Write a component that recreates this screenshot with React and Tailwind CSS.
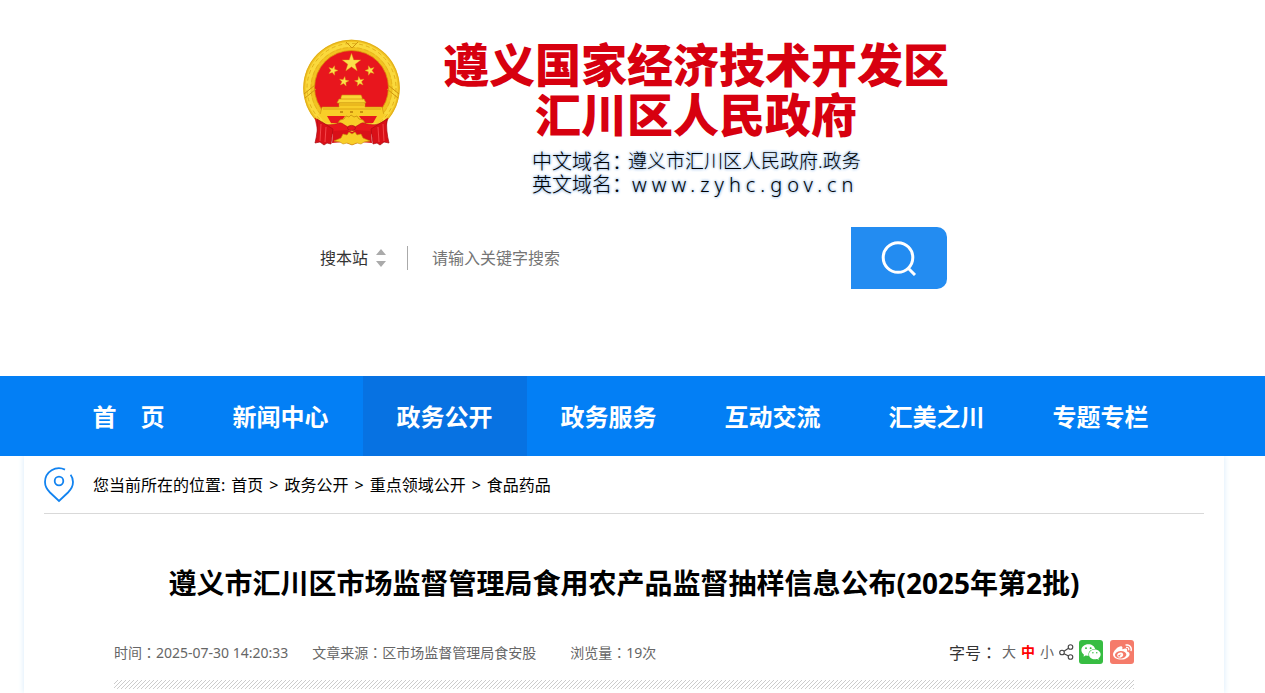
import React from 'react';
import { AiFillWechat } from 'react-icons/ai';
import { FaWeibo } from 'react-icons/fa';

const navItems = [
  { label: '首\u3000页' },
  { label: '新闻中心' },
  { label: '政务公开', active: true },
  { label: '政务服务' },
  { label: '互动交流' },
  { label: '汇美之川' },
  { label: '专题专栏' },
];

const crumbs = ['首页', '政务公开', '重点领域公开', '食品药品'];

function Star({ x, y, r, turn = 0 }) {
  const points = [];
  for (let i = 0; i < 10; i++) {
    const a = ((i * 36 - 90 + turn) * Math.PI) / 180;
    const d = i % 2 ? r * 0.4 : r;
    points.push(`${(x + d * Math.cos(a)).toFixed(2)},${(y + d * Math.sin(a)).toFixed(2)}`);
  }
  return <polygon points={points.join(' ')} fill="#fbe04a" stroke="#e0a416" strokeWidth="0.4" />;
}

function Emblem() {
  return (
    <svg viewBox="0 0 98 108" className="w-[98px] h-[108px] mt-0.5 shrink-0" role="img" aria-label="国徽">
      <circle cx="48.500" cy="49" r="48.300" fill="#f2c321" />
      <circle cx="48.500" cy="49" r="47.800" fill="none" stroke="#dba81a" strokeWidth="0.8" />
      <circle cx="48.500" cy="49" r="43.500" fill="none" stroke="#fad93c" strokeWidth="5" />
      <circle cx="48.500" cy="49" r="44.500" fill="none" stroke="#e3b11c" strokeWidth="1" strokeDasharray="4 3" />
      <circle cx="48.500" cy="49" r="40.500" fill="none" stroke="#e3b11c" strokeWidth="0.8" strokeDasharray="5 2" />
      <circle cx="48.500" cy="48.500" r="37" fill="#e8161d" stroke="#d9940c" strokeWidth="0.8" />
      <path d="M1 55l11-9M2 59l11-9M96 55l-11-9M95 59l-11-9M43 3l6 6 6-6" stroke="#cf9510" strokeWidth="1" fill="none" />
      <Star x={48.5} y={24} r={9.6} />
      <Star x={30} y={31.5} r={5} turn={18} />
      <Star x={67} y={31.5} r={5} turn={-18} />
      <Star x={41} y={42.5} r={5} turn={10} />
      <Star x={56.5} y={42.5} r={5} turn={-10} />
      {/* gate tower */}
      <path d="M38 58l1-2h19l1 2v2h2l2 4H34l2-4h2z" fill="#fbd637" stroke="#c98e0b" strokeWidth="0.6" />
      <path d="M36 64h26v4h17l2 8H17l2-8h17z" fill="#f8cd28" stroke="#c98e0b" strokeWidth="0.6" />
      <path d="M38 60h22M37 66h24M20 70h58" stroke="#d59a0e" strokeWidth="0.8" />
      <path d="M37 73h3M47 73h3M57 73h3" stroke="#b97c08" strokeWidth="1.4" />
      <path d="M15 75h68l-7 9H22z" fill="#f8cd28" />
      <path d="M24 77h18l-5 7h-9zM74 77H56l5 7h9z" fill="#e8161d" />
      {/* gear between the curtains */}
      <path d="M31 90l6-9 4-1 2-3 3 1 2-2 3 2 3-1 2 3 4 1 6 9z" fill="#f8cd28" stroke="#c98e0b" strokeWidth="0.8" />
      <path d="M12 79c10 9 17 7 24 5 4-1 6 4 12.500 5 6.500-1 8.500-6 12.500-5 7 2 14 4 24-5l-4 14c-10 3-24 2-33-3-9 5-23 6-33 3z" fill="#e8161d" stroke="#b50d14" strokeWidth="0.5" />
      <path d="M14 80l16 10-2 15-4-1-3 2-4-3-5 1c2-8 3-16 2-24zM84 80L68 90l2 15 4-1 3 2 4-3 5 1c-2-8-3-16-2-24z" fill="#d91018" stroke="#a90b12" strokeWidth="0.7" />
      <path d="M18 85l-1 17M23 88l-1 15M80 85l1 17M75 88l1 15" stroke="#f4454a" strokeWidth="1" />
      <path d="M30 92l15-1 4 2 4-2 15 1 1 12-12-1-8 3-8-3-12 1z" fill="#d91018" />
      <path d="M31 102l7-3 2-4 4 1 2-3 3 2 3-2 2 3 4-1 2 4 7 3-6 1-3 2-4-1-5 2-5-2-4 1-3-2z" fill="#f8cd28" stroke="#c98e0b" strokeWidth="0.6" />
      <ellipse cx="48.500" cy="89" rx="4" ry="2.600" fill="#e8161d" stroke="#a90b12" strokeWidth="0.7" />
    </svg>
  );
}

function PinIcon() {
  return (
    <svg viewBox="0 0 30 36" className="w-[30px] h-9" fill="none" stroke="#1283f0" strokeWidth="1.8">
      <path d="M21 2.600A14 14 0 0 0 1 15C1 19.500 3.500 23 6 25.500L15 34l9-8.500c2.500-2.500 5-6 5-10.500 0-2.700-.8-5.200-2.400-7.300" />
      <circle cx="15" cy="14" r="4.300" />
    </svg>
  );
}

function ShareIcon() {
  return (
    <svg viewBox="0 0 15 16" className="w-[15px] h-4" fill="none" stroke="#444" strokeWidth="1.1">
      <circle cx="3" cy="8.500" r="2.300" />
      <circle cx="11.500" cy="3" r="2.300" />
      <circle cx="11.500" cy="13" r="2.300" />
      <path d="M5 7.300l4.500-3M5 9.700l4.700 2.300" />
    </svg>
  );
}

function HatchStrip() {
  return (
    <svg className="block w-full h-[9px] mt-4" shapeRendering="crispEdges" aria-hidden="true">
      <defs>
        <pattern id="hatch" width="4" height="4" patternUnits="userSpaceOnUse">
          <path d="M3 0h1v1h-1zM2 1h1v1h-1zM1 2h1v1h-1zM0 3h1v1h-1z" fill="#ccc" />
        </pattern>
      </defs>
      <rect width="100%" height="9" fill="url(#hatch)" />
    </svg>
  );
}

// full-width colon set in the middle of its square
function Colon() {
  return <span className="font-['Noto_Sans_CJK_TC',sans-serif]">：</span>;
}

function Header() {
  return (
    <header className="h-[376px] pt-[37px] pr-[17px]">
      <div className="w-full max-w-[646px] mx-auto">
        <a href="#home" className="flex items-start gap-[42px] pl-0.5">
          <Emblem />
          <div className="text-center">
            <h1 className="text-[46px] leading-[50px] font-black text-[#d7000f] whitespace-nowrap font-['Noto_Sans_CJK_SC',sans-serif]">
              遵义国家经济技术开发区
              <br />
              汇川区人民政府
            </h1>
            <div className="mt-[13px] pl-[89px] text-left text-xl leading-[23px] font-light text-black whitespace-nowrap [text-shadow:0_0_3px_#8fb8e6,0_0_3px_#8fb8e6]">
              <p className="flex">
                <span className="w-24">中文域名：</span>
                <span className="text-[19px]">遵义市汇川区人民政府.政务</span>
              </p>
              <p className="flex">
                <span>英文域名：</span>
                <span className="tracking-[5px]">www.zyhc.gov.cn</span>
              </p>
            </div>
          </div>
        </a>
        <form className="mt-[31px] flex items-center h-[62px] pl-[19px]" onSubmit={(e) => e.preventDefault()}>
          <div className="relative flex items-center">
            <select aria-label="搜索范围" className="appearance-none w-[66px] text-base text-[#333] bg-transparent outline-none" defaultValue="site">
              <option value="site">搜本站</option>
            </select>
            <svg viewBox="0 0 10 18" className="absolute right-0 w-2.5 h-[18px] pointer-events-none" fill="#aaa">
              <path d="M5 0l5 6H0zM5 18l5-6H0z" />
            </svg>
          </div>
          <span className="w-px h-6 ml-[21px] bg-[#aaa]" />
          <input
            type="text"
            aria-label="关键字"
            placeholder="请输入关键字搜索"
            className="flex-1 min-w-0 h-full px-6 text-base outline-none placeholder:text-[#757575]"
          />
          <button type="submit" aria-label="搜索" className="w-24 h-full flex items-center justify-center rounded-r-[10px] bg-[#238cf1]">
            <svg viewBox="0 0 36 36" className="w-9 h-9" fill="none" stroke="#fff" strokeWidth="3">
              <circle cx="17" cy="17.500" r="14.800" />
              <path d="M27 28l7 7" />
            </svg>
          </button>
        </form>
      </div>
    </header>
  );
}

function Nav() {
  return (
    <nav className="bg-[#037ff5] pr-6">
      <ul className="flex justify-center h-20">
        {navItems.map((item) => (
          <li key={item.label}>
            <a
              href="#nav"
              className={`flex items-center h-full px-[34px] pt-0.5 text-2xl font-bold text-white whitespace-nowrap ${item.active ? 'bg-[#0772e2]' : ''}`}
            >
              {item.label}
            </a>
          </li>
        ))}
      </ul>
    </nav>
  );
}

export default function App() {
  return (
    <div className="min-h-screen flex flex-col bg-white text-black font-['Noto_Sans','Noto_Sans_CJK_SC',sans-serif]">
      <Header />
      <Nav />
      <div className="flex-1 flex pr-[17px] overflow-hidden">
        <main className="w-full max-w-[1200px] mx-auto px-5 bg-white shadow-[0_0_6px_#d5eafa]">
          <div className="flex items-center gap-[19px] h-[58px] border-b border-[#d9d9d9]">
            <PinIcon />
            <div className="flex items-center gap-1.5 text-base">
              <span>您当前所在的位置:</span>
              {crumbs.map((c, i) => (
                <React.Fragment key={c}>
                  {i > 0 && <span>&gt;</span>}
                  <a href="#crumb">{c}</a>
                </React.Fragment>
              ))}
            </div>
          </div>
          <h2 className="mt-12 text-[28px] leading-[42px] font-bold text-center">
            遵义市汇川区市场监督管理局食用农产品监督抽样信息公布(2025年第2批)
          </h2>
          <div className="px-[70px]">
            <div className="mt-9 flex items-center justify-between h-6 text-sm text-[#666]">
              <div className="flex">
                <span>时间<Colon />2025-07-30 14:20:33</span>
                <span className="ml-6">文章来源<Colon />区市场监督管理局食安股</span>
                <span className="ml-[34px]">浏览量<Colon />19次</span>
              </div>
              <div className="flex items-center gap-[5px]">
                <span className="text-base text-[#333]">字号<Colon /></span>
                <button type="button">大</button>
                <button type="button" className="font-bold text-[#f00]">中</button>
                <button type="button">小</button>
                <a href="#share" aria-label="分享"><ShareIcon /></a>
                <a href="#wechat" aria-label="微信" className="flex items-center justify-center size-6 rounded-[3px] bg-[#37bd42] text-white">
                  <AiFillWechat size={22} />
                </a>
                <a href="#weibo" aria-label="微博" className="ml-0.5 flex items-center justify-center size-6 rounded-[3px] bg-[#f57b6a] text-white">
                  <FaWeibo size={19} />
                </a>
              </div>
            </div>
            <HatchStrip />
          </div>
        </main>
      </div>
    </div>
  );
}
